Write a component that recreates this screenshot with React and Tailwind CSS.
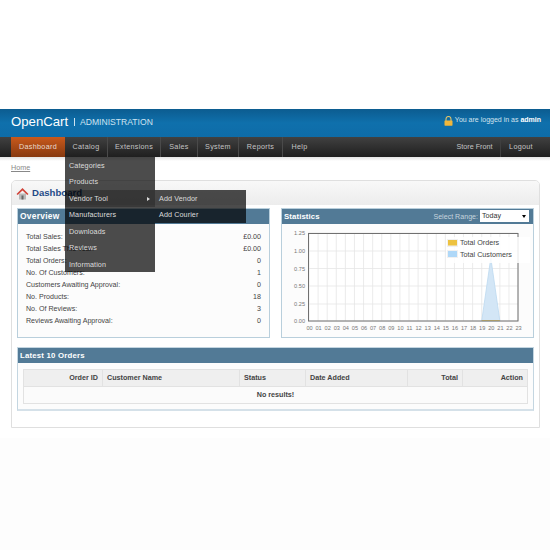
const F = "font-['Liberation_Sans',Arial,sans-serif]";

const navL = [["Catalog", "w-[43px]"], ["Extensions", "w-[53px]"], ["Sales", "w-[37px]"], ["System", "w-[41px]"], ["Reports", "w-[44px]"], ["Help", "w-[33px]"]];
const stats = [
  ["Total Sales:", "£0.00"],
  ["Total Sales This Year:", "£0.00"],
  ["Total Orders:", "0"],
  ["No. Of Customers:", "1"],
  ["Customers Awaiting Approval:", "0"],
  ["No. Products:", "18"],
  ["No. Of Reviews:", "3"],
  ["Reviews Awaiting Approval:", "0"],
];
const menu = ["Categories", "Products", "Vendor Tool", "Manufacturers", "Downloads", "Reviews", "Information"];

function Chart() {
  const hours = Array.from({ length: 24 }, (_, i) => i);
  const x = (h) => 28 + 9.09 * h;
  const ys = [[13, "1.25"], [31, "1.00"], [48.5, "0.75"], [66, "0.50"], [84, "0.25"], [101, "0.00"]];
  return (
    <svg width="251" height="112" viewBox="1 4 251 112" className="block">
      <rect x="27.5" y="13.5" width="209.5" height="87.5" fill="#fff" />
      {hours.map((h) => (
        <line key={h} x1={x(h)} x2={x(h)} y1="13" y2="101" stroke="#e6e6e6" strokeWidth="0.8" />
      ))}
      {ys.map(([y]) => (
        <line key={y} x1="27" x2="237" y1={y} y2={y} stroke="#e6e6e6" strokeWidth="0.8" />
      ))}
      <polygon points={`${x(19)},101 ${x(20)},38 ${x(21)},101`} fill="#d3e6f6" stroke="#bcd9f0" strokeWidth="0.8" />
      <line x1={x(19)} x2={x(21)} y1="100.5" y2="100.5" stroke="#edc240" strokeWidth="0.8" />
      <rect x="27.5" y="13.5" width="209.5" height="87.5" fill="none" stroke="#707070" strokeWidth="1" />
      {ys.map(([y, t]) => (
        <text key={t} x="24" y={y + 2} textAnchor="end" fontSize="5.6" fill="#777" fontFamily="Liberation Sans">{t}</text>
      ))}
      {hours.map((h) => (
        <text key={h} x={x(h) + 0.5} y="110" textAnchor="middle" fontSize="5.6" fill="#777" fontFamily="Liberation Sans">{String(h).padStart(2, "0")}</text>
      ))}
      <rect x="165" y="17" width="84" height="26" fill="#fff" opacity="0.85" />
      <rect x="166" y="19" width="11" height="8" fill="#f1f1f1" />
      <rect x="167" y="20" width="9" height="5.5" fill="#edc240" />
      <rect x="166" y="30" width="11" height="8" fill="#f1f1f1" />
      <rect x="167" y="31" width="9" height="6" fill="#afd8f8" />
      <text x="179" y="25" fontSize="7.2" fill="#444" fontFamily="Liberation Sans">Total Orders</text>
      <text x="179" y="36.5" fontSize="7.2" fill="#444" fontFamily="Liberation Sans">Total Customers</text>
    </svg>
  );
}

export default function App() {
  return (
    <div className={`relative w-[550px] h-[550px] overflow-hidden bg-white ${F} text-[7.1px] text-[#333]`}>
      <div className="h-[109px]" />
      <div className="h-[28px] flex items-center justify-between pl-[11px] pr-[9px] bg-gradient-to-b from-[#0c5c90] via-[#0f70ac] to-[#0e6ca8]">
        <div className="flex items-center -mt-[2px]">
          <span className="text-[13.2px] leading-none text-white w-[58px]">OpenCart</span>
          <span className="ml-[5px] w-px h-[8px] bg-[#cfe3f0]" />
          <span className="ml-[5px] text-[8.6px] leading-none text-[#cfe3f0]">ADMINISTRATION</span>
        </div>
        <div className="flex items-center text-[7px] text-[#d3e3ee] -mt-[5px]">
          <svg width="9" height="10" viewBox="0 0 9 10" className="mr-[2px]">
            <path d="M2 5V3a2.5 2.5 0 0 1 5 0v2" fill="none" stroke="#e0c36a" strokeWidth="1.1" />
            <rect x="0.5" y="4.5" width="8" height="5.2" rx="0.6" fill="#f0b73c" />
          </svg>
          <span>You are logged in as <b className="text-white">admin</b></span>
        </div>
      </div>

      <div className="h-[20px] flex justify-between pl-[11px] bg-gradient-to-b from-[#414141] to-[#1f1f1f] text-[7.2px] text-[#c4c4c4] tracking-[0.3px]">
        <div className="flex">
          <div className="w-[54px] pt-px flex items-center justify-center bg-gradient-to-b from-[#c9591c] to-[#873a10] text-[#eadace]">Dashboard</div>
          {navL.map(([t, w]) => (
            <div key={t} className={`${w} pt-px flex items-center justify-center border-r border-[#4a4a4a] last:border-r-0`}>{t}</div>
          ))}
        </div>
        <div className="flex pr-[9px]">
          <div className="w-[52px] pt-px flex items-center justify-center border-r border-[#3f3f3f] tracking-normal">Store Front</div>
          <div className="w-[40px] pt-px flex items-center justify-center">Logout</div>
        </div>
      </div>
      <div className="h-[4px] bg-gradient-to-b from-[#e4e4e4] to-white" />

      <div className="pl-[11px] bg-white">
        <div className="h-[19px] flex items-start pt-[2px] text-[#888] underline text-[7.2px] leading-[9px]">Home</div>

        <div className="w-[529px] h-[248px] border border-[#dfdfdf] rounded-t-[5px] overflow-hidden">
          <div className="h-[24px] flex items-center pl-[4px] bg-gradient-to-b from-[#f8f8f8] to-[#ececec]">
            <svg width="13" height="13" viewBox="0 0 13 13">
              <path d="M3 6.5h7V12.5H3z" fill="#b9b9b9" />
              <rect x="5.5" y="8.5" width="2" height="4" fill="#666" />
              <path d="M0.5 7 6.5 1l6 6-1.2 1-4.8-4.6L1.7 8z" fill="#d1453b" />
            </svg>
            <span className="ml-[3px] text-[9.6px] font-bold text-[#1f4a87]">Dashboard</span>
          </div>

          <div className="px-[5px] pt-[3px]">
            <div className="flex justify-between">
              <div className="w-[253px] h-[130px] border border-[#b9cfdc] bg-[#fcfcfc]">
                <div className="h-[15px] flex items-center pl-[2px] bg-[#527a96] text-white text-[8.4px] font-bold tracking-[0.3px]">Overview</div>
                <div className="px-[8px] pt-[7px] text-[#444]">
                  {stats.map(([a, b]) => (
                    <div key={a} className="h-[12px] flex justify-between items-center">
                      <span>{a}</span>
                      <span>{b}</span>
                    </div>
                  ))}
                </div>
              </div>
              <div className="w-[253px] h-[130px] border border-[#b9cfdc] bg-[#fcfcfc]">
                <div className="h-[15px] flex items-center justify-between pl-[2px] pr-[4px] bg-[#527a96] text-white text-[7.8px] font-bold tracking-[0.1px]">
                  <span>Statistics</span>
                  <div className="flex items-center font-normal text-[#c6d4de] text-[7.1px] tracking-normal">
                    <span className="mr-[2px] mt-[2px]">Select Range:</span>
                    <div className="w-[49px] h-[12px] bg-white text-[#333] pl-[2px] flex items-center justify-between pr-[3px]">
                      <span>Today</span>
                      <span className="w-0 h-0 border-x-[2.5px] border-x-transparent border-t-[3px] border-t-black" />
                    </div>
                  </div>
                </div>
                <Chart />
              </div>
            </div>

            <div className="mt-[9px] h-[64px] border border-[#c4d6e1] border-b-[2px] border-b-[#d5e1e9] bg-[#fcfcfc]">
              <div className="h-[15px] flex items-center pl-[2px] bg-[#527a96] text-white text-[7.8px] font-bold tracking-[0.2px]">Latest 10 Orders</div>
              <div className="px-[5px] pt-[6px]">
                <table className="w-[505px] table-fixed border-collapse text-[7.2px] text-[#444]">
                  <thead>
                    <tr className="h-[17px] bg-[#efefef] font-bold">
                      <th className="w-[79px] border border-[#e2e2e2] pr-[4px] text-right">Order ID</th>
                      <th className="w-[137px] border border-[#e2e2e2] pl-[4px] text-left">Customer Name</th>
                      <th className="w-[66px] border border-[#e2e2e2] pl-[4px] text-left">Status</th>
                      <th className="w-[102px] border border-[#e2e2e2] pl-[4px] text-left">Date Added</th>
                      <th className="w-[55px] border border-[#e2e2e2] pr-[4px] text-right">Total</th>
                      <th className="border border-[#e2e2e2] pr-[4px] text-right">Action</th>
                    </tr>
                  </thead>
                  <tbody>
                    <tr className="h-[17px] bg-[#fbfbfb]">
                      <td colSpan={6} className="border border-[#e2e2e2] text-center font-bold">No results!</td>
                    </tr>
                  </tbody>
                </table>
              </div>
            </div>
          </div>
        </div>
      </div>
      <div className="mt-[10px] h-[112px] bg-[#fdfdfd]" />

      <div className="absolute left-[65px] top-[190px] w-[90px] h-[17px] bg-black/25" />
      <div className="absolute left-[65px] top-[157px] w-[90px] h-[115px] bg-black/70 text-[#dcdcdc] text-[7.2px] tracking-[0.1px] flex flex-col pl-[4px] pt-px">
        {menu.map((m) => (
          <div key={m} className="h-[16.5px] shrink-0 flex items-center justify-between pr-[5px]">
            <span>{m}</span>
            {m === "Vendor Tool" && <span className="w-0 h-0 border-y-[2.5px] border-y-transparent border-l-[3px] border-l-[#ddd]" />}
          </div>
        ))}
      </div>
      <div className="absolute left-[155px] top-[190px] w-[91px] h-[33px] bg-black/70 text-[#dcdcdc] text-[7.2px] tracking-[0.1px] flex flex-col pl-[4px] pt-px">
        <div className="h-[16.5px] shrink-0 flex items-center">Add Vendor</div>
        <div className="h-[16.5px] shrink-0 flex items-center">Add Courier</div>
      </div>
    </div>
  );
}
